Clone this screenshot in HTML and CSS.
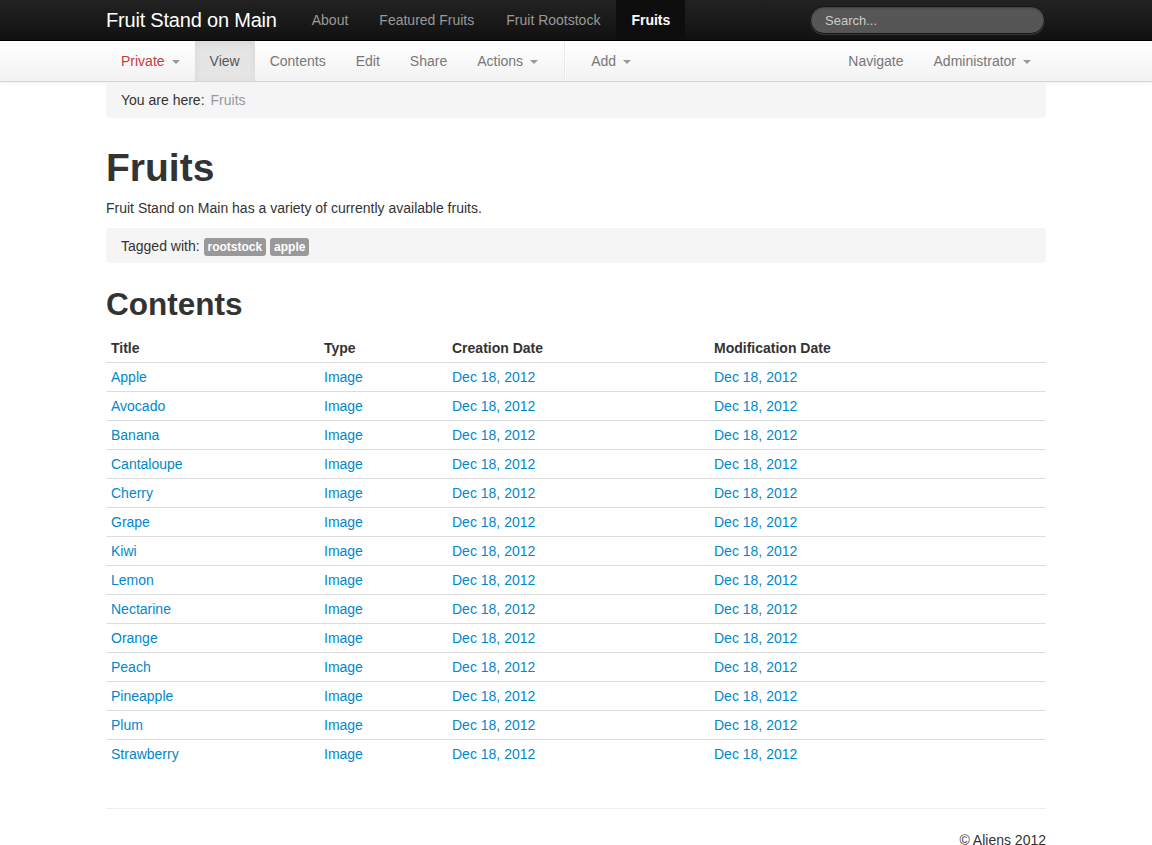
FILE: index.html
```html
<!DOCTYPE html>
<html>
<head>
<meta charset="utf-8">
<title>Fruits</title>
<link rel="stylesheet" href="styles.css">
</head>
<body>
<header class="navbar">
  <div class="container nav-inner">
    <a class="brand" href="#">Fruit Stand on Main</a>
    <ul class="nav">
      <li><a href="#">About</a></li>
      <li><a href="#">Featured Fruits</a></li>
      <li><a href="#">Fruit Rootstock</a></li>
      <li class="active"><a href="#">Fruits</a></li>
    </ul>
    <form class="search">
      <input class="search-query" type="text" placeholder="Search...">
    </form>
  </div>
</header>
<div class="toolbar">
  <div class="container tool-inner">
    <ul class="tools">
      <li><a href="#" class="state">Private<span class="caret"></span></a></li>
      <li class="active"><a href="#">View</a></li>
      <li><a href="#">Contents</a></li>
      <li><a href="#">Edit</a></li>
      <li><a href="#">Share</a></li>
      <li><a href="#">Actions<span class="caret"></span></a></li>
      <li class="divider"></li>
      <li><a href="#">Add<span class="caret"></span></a></li>
    </ul>
    <ul class="tools tools-right">
      <li><a href="#">Navigate</a></li>
      <li><a href="#">Administrator<span class="caret"></span></a></li>
    </ul>
  </div>
</div>
<main class="container">
  <div class="breadcrumb">You are here:<span class="crumb">Fruits</span></div>
  <h1 class="title">Fruits</h1>
  <p class="desc">Fruit Stand on Main has a variety of currently available fruits.</p>
  <div class="tags">Tagged with: <span class="label">rootstock</span> <span class="label">apple</span></div>
  <h2 class="subtitle">Contents</h2>
  <table class="table">
    <colgroup>
      <col class="c1"><col class="c2"><col class="c3"><col class="c4">
    </colgroup>
    <thead>
      <tr><th>Title</th><th>Type</th><th>Creation Date</th><th>Modification Date</th></tr>
    </thead>
    <tbody>
      <tr><td><a href="#">Apple</a></td><td><a href="#">Image</a></td><td><a href="#">Dec 18, 2012</a></td><td><a href="#">Dec 18, 2012</a></td></tr>
      <tr><td><a href="#">Avocado</a></td><td><a href="#">Image</a></td><td><a href="#">Dec 18, 2012</a></td><td><a href="#">Dec 18, 2012</a></td></tr>
      <tr><td><a href="#">Banana</a></td><td><a href="#">Image</a></td><td><a href="#">Dec 18, 2012</a></td><td><a href="#">Dec 18, 2012</a></td></tr>
      <tr><td><a href="#">Cantaloupe</a></td><td><a href="#">Image</a></td><td><a href="#">Dec 18, 2012</a></td><td><a href="#">Dec 18, 2012</a></td></tr>
      <tr><td><a href="#">Cherry</a></td><td><a href="#">Image</a></td><td><a href="#">Dec 18, 2012</a></td><td><a href="#">Dec 18, 2012</a></td></tr>
      <tr><td><a href="#">Grape</a></td><td><a href="#">Image</a></td><td><a href="#">Dec 18, 2012</a></td><td><a href="#">Dec 18, 2012</a></td></tr>
      <tr><td><a href="#">Kiwi</a></td><td><a href="#">Image</a></td><td><a href="#">Dec 18, 2012</a></td><td><a href="#">Dec 18, 2012</a></td></tr>
      <tr><td><a href="#">Lemon</a></td><td><a href="#">Image</a></td><td><a href="#">Dec 18, 2012</a></td><td><a href="#">Dec 18, 2012</a></td></tr>
      <tr><td><a href="#">Nectarine</a></td><td><a href="#">Image</a></td><td><a href="#">Dec 18, 2012</a></td><td><a href="#">Dec 18, 2012</a></td></tr>
      <tr><td><a href="#">Orange</a></td><td><a href="#">Image</a></td><td><a href="#">Dec 18, 2012</a></td><td><a href="#">Dec 18, 2012</a></td></tr>
      <tr><td><a href="#">Peach</a></td><td><a href="#">Image</a></td><td><a href="#">Dec 18, 2012</a></td><td><a href="#">Dec 18, 2012</a></td></tr>
      <tr><td><a href="#">Pineapple</a></td><td><a href="#">Image</a></td><td><a href="#">Dec 18, 2012</a></td><td><a href="#">Dec 18, 2012</a></td></tr>
      <tr><td><a href="#">Plum</a></td><td><a href="#">Image</a></td><td><a href="#">Dec 18, 2012</a></td><td><a href="#">Dec 18, 2012</a></td></tr>
      <tr><td><a href="#">Strawberry</a></td><td><a href="#">Image</a></td><td><a href="#">Dec 18, 2012</a></td><td><a href="#">Dec 18, 2012</a></td></tr>
    </tbody>
  </table>
  <footer class="footer">
    <p>&copy; Aliens 2012</p>
  </footer>
</main>
</body>
</html>
```
FILE: styles.css
```css
* { box-sizing: border-box; }
html, body { margin: 0; padding: 0; }
body {
  font-family: "Liberation Sans", Arial, sans-serif;
  font-size: 14px;
  line-height: 20px;
  color: #333;
  background: #fff;
}
a { color: #0088cc; text-decoration: none; }
ul { list-style: none; margin: 0; padding: 0; }
.container { width: 940px; margin: 0 auto; }

/* top navbar */
.navbar {
  height: 41px;
  background: linear-gradient(#222222, #111111);
  border-bottom: 1px solid #000;
}
.nav-inner { display: flex; align-items: center; height: 40px; }
.brand {
  color: #fff;
  font-size: 20px;
  line-height: 20px;
  padding: 10px 20px 10px 0;
  letter-spacing: -0.2px;
}
.nav { display: flex; }
.nav li a {
  display: block;
  padding: 10px 15px;
  color: #999;
  font-size: 14px;
  line-height: 20px;
}
.nav li:nth-child(2) a { padding-left: 16px; padding-right: 16px; }
.nav li:nth-child(3) a { padding-left: 16px; padding-right: 16px; }
.nav li.active a { background: #0e0e0e; color: #fff; font-weight: bold; }
.search { margin: 0 1px 0 auto; }
.search-query {
  display: block;
  width: 235px;
  height: 28px;
  padding: 4px 14px;
  border-radius: 14px;
  border: 1px solid #151515;
  background: #565656;
  color: #fff;
  font-family: "Liberation Sans", Arial, sans-serif;
  font-size: 13px;
  box-shadow: inset 0 1px 2px rgba(0,0,0,0.3), 0 1px 0 rgba(255,255,255,0.15);
  outline: none;
}
.search-query::placeholder { color: #cccccc; }

/* toolbar */
.toolbar {
  height: 41px;
  background: linear-gradient(#ffffff, #f2f2f2);
  border-bottom: 1px solid #d4d4d4;
  box-shadow: 0 1px 4px rgba(0,0,0,0.065);
}
.tool-inner { display: flex; height: 40px; }
.tools { display: flex; }
.tools-right { margin-left: auto; }
.tools li a {
  display: flex;
  align-items: center;
  height: 40px;
  padding: 0 15px;
  color: #777;
  font-size: 14px;
}
.tools li.active a { background: #e5e5e5; color: #555; box-shadow: inset 0 3px 8px rgba(0,0,0,0.06); }
.tools li a.state { color: #c43c3c; }
.caret {
  display: inline-block;
  width: 0;
  height: 0;
  margin-left: 7px;
  margin-top: 1px;
  border-top: 4px solid #999;
  border-left: 4px solid transparent;
  border-right: 4px solid transparent;
}
.tools li.divider {
  height: 40px;
  margin: 0 10px 0 11px;
  border-left: 1px solid #e8e8e8;
  border-right: 1px solid #fff;
}

/* content */
.breadcrumb {
  margin: 0 0 20px;
  padding: 8px 15px;
  background: #f5f5f5;
  border-radius: 0 0 4px 4px;
}
.crumb { color: #999; margin-left: 6px; }
.title {
  margin: 30px 0 10px;
  font-size: 39px;
  line-height: 40px;
  font-weight: bold;
  color: #333;
}
.desc { margin: 0 0 10px; }
.tags {
  padding: 8px 15px 7px;
  background: #f5f5f5;
  border-radius: 4px;
  margin-bottom: 21px;
}
.label {
  display: inline-block;
  padding: 2px 4px;
  font-size: 12px;
  font-weight: bold;
  line-height: 14px;
  color: #fff;
  background: #999;
  border-radius: 3px;
  vertical-align: baseline;
}
.subtitle {
  margin: 10px 0;
  font-size: 31.5px;
  line-height: 40px;
  font-weight: bold;
  color: #333;
}
.table {
  width: 940px;
  border-collapse: collapse;
  border-spacing: 0;
  margin-bottom: 40px;
}
.c1 { width: 213px; }
.c2 { width: 128px; }
.c3 { width: 262px; }
.c4 { width: 337px; }
.table th, .table td {
  padding: 4px 5px;
  text-align: left;
  line-height: 20px;
  vertical-align: top;
  border-top: 1px solid #dddddd;
}
.table thead th { border-top: 0; font-weight: bold; color: #333; }
.footer {
  padding-top: 21px;
  border-top: 1px solid #eeeeee;
}
.footer p { margin: 0; text-align: right; }
```
